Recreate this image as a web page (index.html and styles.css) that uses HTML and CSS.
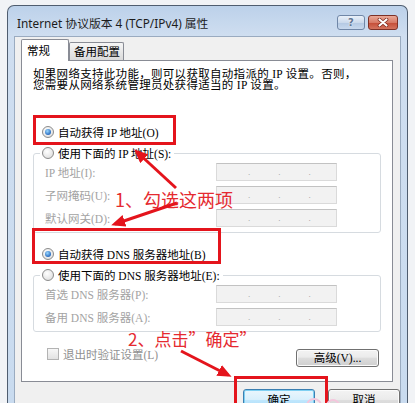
FILE: index.html
```html
<!DOCTYPE html>
<html lang="zh-CN">
<head>
    <meta charset="UTF-8">
    <meta name="viewport" content="width=device-width, initial-scale=1.0">
    <title>Internet 协议版本 4 (TCP/IPv4) 属性</title>
    <link rel="stylesheet" href="styles.css">
</head>
<body>
    <div class="window">
        <div class="titlebar">
            <span class="title">Internet 协议版本 4 (TCP/IPv4) 属性</span>
            <div class="caption-btns">
                <span class="cap help">?</span>
                <span class="cap close">
                    <svg width="12" height="9" viewBox="0 0 12 9">
                        <path d="M2.5 1.5 L9.5 7.5 M9.5 1.5 L2.5 7.5" stroke="#7a2418" stroke-width="3.6" stroke-linecap="round"/>
                        <path d="M2.5 1.5 L9.5 7.5 M9.5 1.5 L2.5 7.5" stroke="#fff" stroke-width="2.2" stroke-linecap="round"/>
                    </svg>
                </span>
            </div>
        </div>
        <div class="client">
            <div class="tabs">
                <div class="tab active">常规</div>
                <div class="tab">备用配置</div>
            </div>
            <div class="panel">
                <p class="intro">如果网络支持此功能，则可以获取自动指派的 IP 设置。否则，<br>您需要从网络系统管理员处获得适当的 IP 设置。</p>

                <div class="opt gap-first"><span class="radio checked"></span>自动获得 IP 地址(O)</div>
                <fieldset class="group">
                    <legend class="opt"><span class="radio"></span>使用下面的 IP 地址(S):</legend>
                    <div class="field"><span class="lbl">IP 地址(I):</span><span class="ip"><i>.</i><i>.</i><i>.</i></span></div>
                    <div class="field"><span class="lbl">子网掩码(U):</span><span class="ip"><i>.</i><i>.</i><i>.</i></span></div>
                    <div class="field"><span class="lbl">默认网关(D):</span><span class="ip"><i>.</i><i>.</i><i>.</i></span></div>
                </fieldset>

                <div class="opt gap-second"><span class="radio checked"></span>自动获得 DNS 服务器地址(B)</div>
                <fieldset class="group">
                    <legend class="opt"><span class="radio"></span>使用下面的 DNS 服务器地址(E):</legend>
                    <div class="field"><span class="lbl">首选 DNS 服务器(P):</span><span class="ip"><i>.</i><i>.</i><i>.</i></span></div>
                    <div class="field"><span class="lbl">备用 DNS 服务器(A):</span><span class="ip"><i>.</i><i>.</i><i>.</i></span></div>
                </fieldset>

                <div class="extra">
                    <div class="check"><span class="box"></span>退出时验证设置(L)</div>
                    <button class="btn advanced">高级(V)...</button>
                </div>
            </div>
            <div class="actions">
                <button class="btn default">确定</button>
                <button class="btn">取消</button>
            </div>
        </div>
    </div>

    <!-- annotations drawn over the screenshot -->
    <div class="annot">
        <div class="mark mark-ip"></div>
        <div class="mark mark-dns"></div>
        <div class="mark mark-ok"></div>
        <div class="note note-1">1、勾选这两项</div>
        <div class="note note-2">2、点击”确定”</div>
        <svg class="arrows" width="415" height="403" viewBox="0 0 415 403">
            <defs>
                <marker id="head" markerUnits="userSpaceOnUse" markerWidth="14" markerHeight="12" refX="10" refY="6" orient="auto">
                    <path d="M0 0 L14 6 L0 12 z" fill="#e4141c"/>
                </marker>
            </defs>
            <line x1="176" y1="188" x2="137" y2="152" stroke="#e4141c" stroke-width="3" marker-end="url(#head)"/>
            <line x1="177" y1="203" x2="115" y2="224" stroke="#e4141c" stroke-width="3" marker-end="url(#head)"/>
            <line x1="181" y1="351" x2="228" y2="375" stroke="#e4141c" stroke-width="3" marker-end="url(#head)"/>
            <circle cx="314" cy="406" r="7" fill="none" stroke="#f3c6dc" stroke-width="2"/>
            <circle cx="333" cy="406" r="6" fill="none" stroke="#f3c6dc" stroke-width="2"/>
        </svg>
    </div>
</body>
</html>
```

FILE: styles.css
```css
body {
    margin: 0;
    width: 415px;
    height: 403px;
    overflow: hidden;
    position: relative;
    background: #f1f3f6;
}
.window {
    margin: 5px 0 0 7px;
    width: 401px;
    height: 398px;
    box-sizing: border-box;
    border: 1px solid #4f5d6f;
    border-bottom: none;
    border-radius: 7px 7px 0 0;
    padding: 0 6px;
    overflow: hidden;
    background: linear-gradient(#bcd1ea, #cfdef0 30px, #c9dbef);
    font-family: "Liberation Serif", "Noto Sans CJK SC", serif;
    font-size: 11.5px;
    color: #000;
}
.titlebar {
    height: 30px;
    box-sizing: border-box;
    padding: 3px 3px 0 3px;
    display: flex;
    align-items: center;
}
.title {
    font-family: "Noto Sans", "Noto Sans CJK SC", sans-serif;
    font-size: 11.8px;
    color: #1c1c1c;
}
.caption-btns {
    margin-left: auto;
    display: flex;
    gap: 3px;
}
.cap {
    height: 15px;
    box-sizing: border-box;
    border-radius: 3px;
    display: flex;
    align-items: center;
    justify-content: center;
}
.cap.help {
    width: 28px;
    border: 1px solid #7087a7;
    background: linear-gradient(#e9f0f9, #cbdaec 50%, #b3c8e2 51%, #c8d9ee);
    font-family: "DejaVu Sans", sans-serif;
    font-weight: bold;
    font-size: 10px;
    color: #627693;
    text-shadow: 0 0 2px #fff;
}
.cap.close {
    width: 30px;
    border: 1px solid #7d3127;
    background: linear-gradient(#eaa998, #d77a66 50%, #c44c36 51%, #d3735e);
}
.client {
    height: 380px;
    box-sizing: border-box;
    border: 1px solid #9aabc0;
    border-bottom: none;
    background: #f0f0f0;
    padding: 2px 0 0 6px;
}
.tabs {
    display: flex;
    align-items: flex-end;
    height: 21px;
    font-family: "Noto Sans CJK SC", sans-serif;
}
.tab {
    height: 18px;
    box-sizing: border-box;
    border: 1px solid #898c95;
    border-bottom: none;
    border-radius: 2px 2px 0 0;
    padding: 0 3px 0 4px;
    line-height: 17px;
    background: linear-gradient(#f6f6f6, #e8e8e8 50%, #dadada);
}
.tab.active {
    width: 48px;
    height: 22px;
    margin-bottom: -1px;
    padding-left: 5px;
    line-height: 21px;
    background: #fff;
    position: relative;
    z-index: 1;
}
.panel {
    width: 372px;
    height: 322px;
    box-sizing: border-box;
    border: 1px solid #898c95;
    background: #fff;
    padding: 8px 11px 0;
}
.intro {
    margin: 0;
    line-height: 11px;
    letter-spacing: 0.3px;
    white-space: nowrap;
}
.opt {
    display: flex;
    align-items: center;
    gap: 4px;
    height: 18px;
    padding-left: 9px;
    white-space: nowrap;
}
.gap-first {
    margin-top: 32px;
}
.gap-second {
    margin-top: 12px;
}
.radio {
    width: 12px;
    height: 12px;
    box-sizing: border-box;
    border-radius: 50%;
    border: 1px solid #8b8b8b;
    background: radial-gradient(circle at 40% 35%, #fff, #d8d8d8);
    display: flex;
    align-items: center;
    justify-content: center;
}
.radio.checked::after {
    content: "";
    width: 6px;
    height: 6px;
    border-radius: 50%;
    background: radial-gradient(circle at 40% 35%, #9ad8ff, #2a6cc0 70%, #1a4d94);
}
.group {
    width: 348px;
    box-sizing: border-box;
    min-width: 0;
    margin: 3px 0 0;
    padding: 1px 0 5px 11px;
    border: 1px solid #d6dbe0;
    border-radius: 3px;
}
.group legend.opt {
    margin-left: -5px;
    padding: 0 3px 0 2px;
}
.field {
    display: flex;
    align-items: center;
    height: 18px;
    color: #a3a3a3;
    white-space: nowrap;
}
.field + .field {
    margin-top: 5px;
}
.lbl {
    width: 171px;
}
.ip {
    width: 121px;
    height: 18px;
    box-sizing: border-box;
    border: 1px solid #dadada;
    border-top-color: #c2c2c2;
    background: #f2f2f2;
    display: flex;
    gap: 28px;
    padding-left: 31px;
    font-size: 9px;
    line-height: 16px;
    color: #9a9a9a;
}
.ip i {
    font-style: normal;
}
.extra {
    display: flex;
    justify-content: space-between;
    align-items: flex-start;
    margin-top: 13px;
    padding-right: 2px;
}
.check {
    display: flex;
    align-items: center;
    gap: 4px;
    height: 18px;
    padding-left: 14px;
    color: #909090;
}
.box {
    width: 12px;
    height: 12px;
    box-sizing: border-box;
    border: 1px solid #b3b3b3;
    background: linear-gradient(#f7f7f7, #e2e2e2);
}
.btn {
    width: 72px;
    height: 23px;
    box-sizing: border-box;
    padding: 0;
    border: 1px solid #707070;
    border-radius: 3px;
    background: linear-gradient(#f3f3f3, #ebebeb 45%, #dddddd 50%, #cfcfcf);
    box-shadow: inset 0 0 0 1px #fbfbfb;
    font-family: "Liberation Serif", "Noto Sans CJK SC", serif;
    font-size: 11.5px;
    line-height: 21px;
    color: #000;
}
.btn.advanced {
    width: 83px;
    height: 18px;
    margin-top: 4px;
    line-height: 14px;
}
.btn.default {
    border-color: #3c7fb1;
    background: linear-gradient(#eaf6fd, #d9f0fc 45%, #bee6fd 50%, #a7d9f5);
    box-shadow: inset 0 0 0 1px #7fd0f2;
}
.actions {
    display: flex;
    justify-content: flex-end;
    gap: 13px;
    margin-top: 7px;
}
.annot {
    position: absolute;
    left: 0;
    top: 0;
    width: 415px;
    height: 403px;
    pointer-events: none;
}
.arrows {
    position: absolute;
    left: 0;
    top: 0;
}
.mark {
    position: absolute;
    box-sizing: border-box;
    border: 3px solid #e4141c;
}
.mark-ip {
    left: 33px;
    top: 115px;
    width: 143px;
    height: 30px;
}
.mark-dns {
    left: 32px;
    top: 228px;
    width: 189px;
    height: 36px;
}
.mark-ok {
    left: 234px;
    top: 376px;
    width: 94px;
    height: 27px;
    border-bottom: none;
}
.note {
    position: absolute;
    color: #e52a30;
    font-family: "Noto Sans CJK SC", sans-serif;
    white-space: nowrap;
    line-height: 20px;
}
.note-1 {
    left: 115px;
    top: 189px;
    font-size: 18px;
}
.note-2 {
    left: 128px;
    top: 329px;
    font-size: 17px;
}
```
